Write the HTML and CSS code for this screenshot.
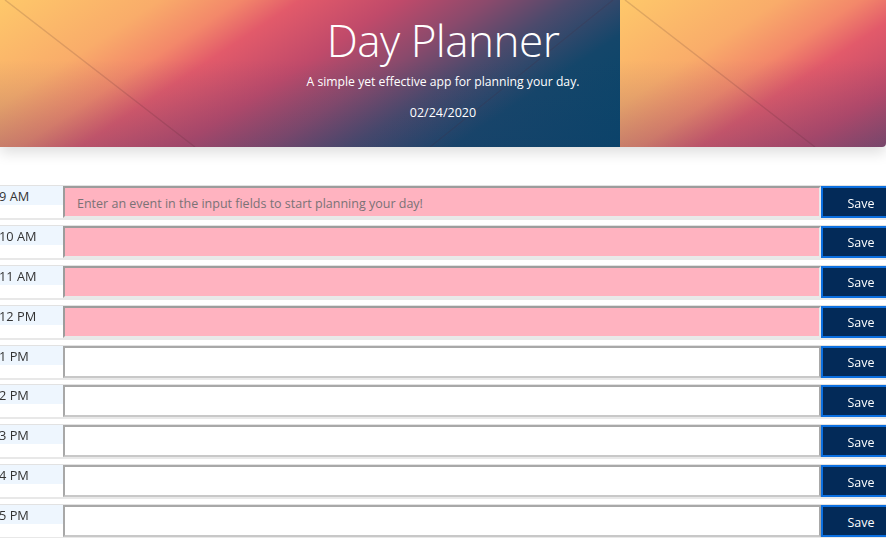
FILE: index.html
```html
<!DOCTYPE html>
<html lang="en">
<head>
<meta charset="utf-8">
<title>Day Planner</title>
<link rel="stylesheet" href="styles.css">
</head>
<body>
<header class="hero">
  <svg class="hero-bg" aria-hidden="true">
    <defs>
      <linearGradient id="grad" gradientUnits="userSpaceOnUse" x1="0" y1="0" x2="258" y2="388">
        <stop offset="0" stop-color="#fec86a"/>
        <stop offset="0.19" stop-color="#f9ac6a"/>
        <stop offset="0.286" stop-color="#f3886a"/>
        <stop offset="0.357" stop-color="#e25a6a"/>
        <stop offset="0.476" stop-color="#c04a6a"/>
        <stop offset="0.583" stop-color="#8a4a6c"/>
        <stop offset="0.68" stop-color="#4c4a6c"/>
        <stop offset="0.8" stop-color="#14466a"/>
        <stop offset="1" stop-color="#03456a"/>
      </linearGradient>
      <linearGradient id="shade" gradientUnits="userSpaceOnUse" x1="0" y1="60" x2="0" y2="147">
        <stop offset="0" stop-color="#2a3a6a" stop-opacity="0"/>
        <stop offset="1" stop-color="#2a3a6a" stop-opacity="0.22"/>
      </linearGradient>
      <pattern id="tile" patternUnits="userSpaceOnUse" width="620" height="147">
        <rect width="620" height="147" fill="url(#grad)"/>
        <rect width="620" height="147" fill="url(#shade)"/>
        <line x1="5" y1="0" x2="195" y2="147" stroke="rgba(70,30,40,0.16)" stroke-width="1.5"/>
        <line x1="613" y1="0" x2="430" y2="147" stroke="rgba(70,30,40,0.14)" stroke-width="1.5"/>
      </pattern>
    </defs>
    <rect width="100%" height="100%" fill="url(#tile)"/>
  </svg>
  <div class="hero-text">
    <h1 class="title">Day Planner</h1>
    <p class="lead">A simple yet effective app for planning your day.</p>
    <p class="date">02/24/2020</p>
  </div>
</header>

<main class="planner">
  <div class="row">
    <div class="hour"><span>9 AM</span></div>
    <textarea class="event past" placeholder="Enter an event in the input fields to start planning your day!"></textarea>
    <button class="save">Save</button>
  </div>
  <div class="row">
    <div class="hour"><span>10 AM</span></div>
    <textarea class="event past"></textarea>
    <button class="save">Save</button>
  </div>
  <div class="row">
    <div class="hour"><span>11 AM</span></div>
    <textarea class="event past"></textarea>
    <button class="save">Save</button>
  </div>
  <div class="row">
    <div class="hour"><span>12 PM</span></div>
    <textarea class="event past"></textarea>
    <button class="save">Save</button>
  </div>
  <div class="row">
    <div class="hour"><span>1 PM</span></div>
    <textarea class="event"></textarea>
    <button class="save">Save</button>
  </div>
  <div class="row">
    <div class="hour"><span>2 PM</span></div>
    <textarea class="event"></textarea>
    <button class="save">Save</button>
  </div>
  <div class="row">
    <div class="hour"><span>3 PM</span></div>
    <textarea class="event"></textarea>
    <button class="save">Save</button>
  </div>
  <div class="row">
    <div class="hour"><span>4 PM</span></div>
    <textarea class="event"></textarea>
    <button class="save">Save</button>
  </div>
  <div class="row">
    <div class="hour"><span>5 PM</span></div>
    <textarea class="event"></textarea>
    <button class="save">Save</button>
  </div>
</main>
</body>
</html>
```

FILE: styles.css
```css
html, body {
  margin: 0;
  padding: 0;
  overflow: hidden;
  background: #fff;
  font-family: "Open Sans", "Noto Sans", sans-serif;
  color: #333;
}

.hero {
  position: relative;
  height: 147px;
  width: 886px;
  border-bottom-right-radius: 4px;
  overflow: hidden;
  box-shadow: 0 6px 14px rgba(0, 0, 0, 0.13);
}

.hero-bg {
  position: absolute;
  left: 0;
  top: 0;
  width: 100%;
  height: 100%;
}

.hero-text {
  position: relative;
  display: flex;
  flex-direction: column;
  align-items: center;
  color: #fff;
  padding-top: 12px;
}

.title {
  margin: 0;
  font-weight: 300;
  font-size: 44px;
  line-height: 56px;
  letter-spacing: -0.5px;
}

.lead {
  margin: 5px 0 0;
  font-size: 12.2px;
  line-height: 18px;
}

.date {
  margin: 13px 0 0;
  font-size: 12.5px;
  line-height: 18px;
}

.planner {
  margin-top: 38px;
  margin-left: -9px;
  width: 910px;
  display: flex;
  flex-direction: column;
  gap: 4.9px;
}

.row {
  display: flex;
  height: 32px;
  border-top: 1px solid #e2e2e2;
  border-bottom: 2px solid #e8e8e8;
}

.hour {
  width: 72px;
  flex: none;
  background: #fff;
  font-size: 12.8px;
}

.hour span {
  display: block;
  height: 19px;
  line-height: 20px;
  padding-left: 8px;
  background: #eef6fe;
}

.event {
  flex: none;
  width: 758px;
  height: 32px;
  box-sizing: border-box;
  margin: 0;
  padding: 8px 12px;
  resize: none;
  border: 2px solid #a8a8a8;
  border-bottom-color: #c8c8c8;
  background: #fff;
  font-family: inherit;
  font-size: 12.5px;
  line-height: 16px;
  color: #333;
}

.event::placeholder {
  color: #7a7276;
}

.event.past {
  background: #ffb3c0;
  border-top-color: #9c9c9c;
  border-left-color: #9c9c9c;
  border-right-color: #e9e9e9;
  border-bottom-color: #e9e9e9;
}

.save {
  flex: none;
  width: 78px;
  height: 32px;
  margin: 0;
  box-sizing: border-box;
  border: 2px solid #0b6fe0;
  border-right: none;
  background: #032a58;
  color: #fff;
  font-family: inherit;
  font-size: 12.5px;
  text-align: center;
  padding: 2px 0 0;
}
```
